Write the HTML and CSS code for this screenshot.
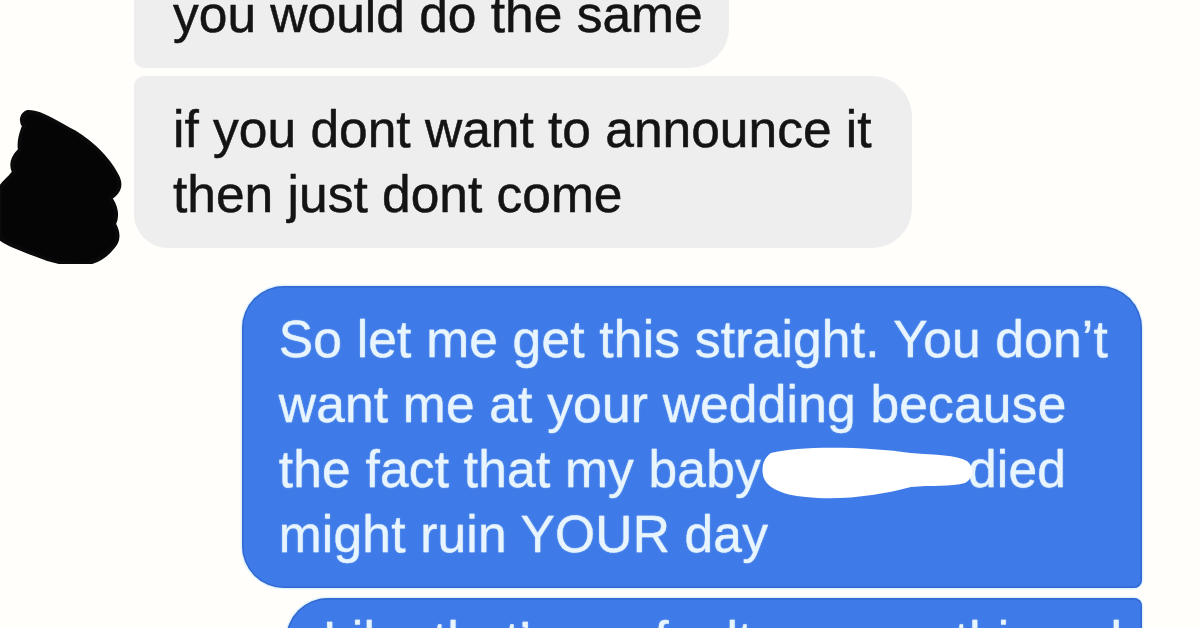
FILE: index.html
```html
<!DOCTYPE html>
<html lang="en">
<head>
<meta charset="utf-8">
<title>Messages</title>
<link rel="stylesheet" href="styles.css">
</head>
<body>
<div class="thread">
  <div class="row in">
    <div class="slot"></div>
    <div class="bubble gray b1">you would do the same</div>
  </div>
  <div class="row in">
    <svg class="avatar" viewBox="0 76 134 186" aria-hidden="true">
      <path d="M28 110 C42 110 58 122 74 130 C90 140 106 154 116 172 C122 182 120 190 110 196 C116 204 118 214 114 222 C118 230 120 238 112 246 C104 256 92 262 78 262 C62 262 48 258 34 252 C20 246 6 242 0 236 L0 186 C4 180 10 176 14 170 C10 162 14 154 20 148 C18 138 22 130 24 124 C20 118 22 112 28 110 Z" fill="#050505" stroke="#0a0a0a" stroke-width="4" stroke-linejoin="round"/>
    </svg>
    <div class="bubble gray b2">if you dont want to announce it<br>then just dont come</div>
  </div>
  <div class="row out first">
    <div class="bubble blue o1">So let me get this straight. You don’t<br>want me at your wedding because<br>the fact that my baby<span class="redact"><svg class="blob" viewBox="0 0 214 56" aria-hidden="true"><path d="M10 8 C40 0 110 2 150 8 C175 10 195 10 206 16 C214 22 212 34 204 38 C190 42 170 40 150 42 C120 50 80 56 45 52 C20 50 4 42 2 30 C0 20 4 12 10 8 Z" fill="#ffffff"/></svg></span>died<br>might ruin YOUR day</div>
  </div>
  <div class="row out">
    <div class="bubble blue o2">Like that’s my fault or something ok</div>
  </div>
</div>
</body>
</html>
```
FILE: styles.css
```css
html, body {
  margin: 0;
  padding: 0;
  background: #fffefb;
}
body {
  width: 1200px;
  height: 628px;
  overflow: hidden;
  font-family: "Liberation Sans", Arial, sans-serif;
}
.thread {
  display: flex;
  flex-direction: column;
  margin-top: -39px;
}
.row {
  display: flex;
}
.row.in {
  align-items: flex-end;
}
.row.in + .row.in {
  margin-top: 8px;
}
.slot {
  width: 134px;
  flex: none;
}
.avatar {
  display: block;
  flex: none;
  width: 134px;
  height: 186px;
  margin-bottom: -16px;
}
.bubble {
  font-size: 51.5px;
  line-height: 65px;
  white-space: nowrap;
}
.gray {
  background: #eeeeee;
  color: #141414;
  -webkit-text-stroke: 0.5px #141414;
  padding: 21px 34px 21px 39px;
}
.b1 {
  border-radius: 40px 40px 40px 10px;
  padding-right: 26px;
}
.b2 {
  border-radius: 10px 40px 40px 34px;
  padding-right: 40px;
}
.row.out {
  justify-content: flex-end;
  padding-right: 58px;
}
.row.out.first {
  margin-top: 38px;
}
.row.out + .row.out {
  margin-top: 10px;
}
.blue {
  background: #3f7be8;
  color: #e8f5ff;
  letter-spacing: 0.2px;
  -webkit-text-stroke: 0.3px #e8f5ff;
  text-shadow: 0 0 2px rgba(190, 225, 255, 0.55);
  box-shadow: inset 0 0 0 1.5px rgba(40, 90, 190, 0.55), 0 0 0 1.5px rgba(220, 240, 255, 0.8);
  padding: 21px 34px 21px 37px;
}
.o1 {
  border-radius: 42px 42px 8px 42px;
}
.o2 {
  width: 785px;
  border-radius: 42px 8px 8px 42px;
  padding-top: 10px;
  overflow: hidden;
}
.redact {
  position: relative;
  display: inline-block;
  width: 207px;
  height: 0;
}
.blob {
  position: absolute;
  left: 0;
  bottom: -14px;
  width: 214px;
  height: 56px;
}
```
